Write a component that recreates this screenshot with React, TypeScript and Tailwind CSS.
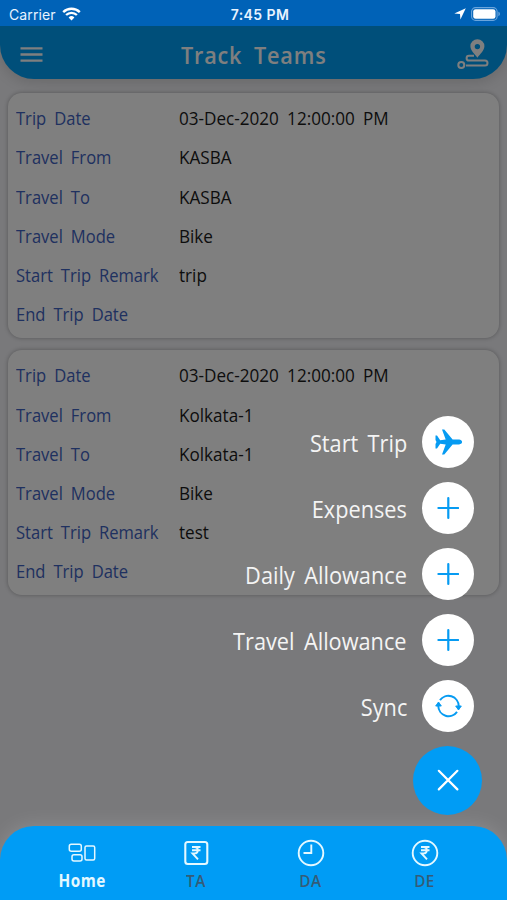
import type { ReactNode } from "react"
import clsx from "clsx"

interface Trip {
  mode: string
  from: string
  to: string
  remark: string
}

const trips: Trip[] = [
  { from: "KASBA", to: "KASBA", mode: "Bike", remark: "trip" },
  { from: "Kolkata-1", to: "Kolkata-1", mode: "Bike", remark: "test" },
]

function StatusBar() {
  return (
    <div className="relative z-20 grid h-[26px] shrink-0 grid-cols-3 items-center bg-[#0062b7] pl-[9px] pr-[6px] pt-[2px] font-['Inter',sans-serif] text-[13px] text-[#e8f3ff]">
      <div className="flex items-center gap-[6px]">
        <span className="text-[14px] tracking-[0.1px]">Carrier</span>
        <svg width="19" height="14" viewBox="0 0 19 14" fill="none" stroke="white" strokeWidth="2.4">
          <path d="M1.2 5.1a12 12 0 0 1 16.6 0M4.1 8a7.8 7.8 0 0 1 10.8 0" />
          <path d="M9.5 13.4 6.6 10.5a4.1 4.1 0 0 1 5.8 0z" fill="white" stroke="none" />
        </svg>
      </div>
      <span className="pl-[10px] text-center text-[14px] font-semibold tracking-[0.4px]">7:45 PM</span>
      <div className="flex items-center justify-end gap-[5px]">
        <svg width="12" height="12" viewBox="0 0 12 12" fill="white">
          <path d="M11.8.2 6.4 11.6 6 6.1.3 5.6z" />
        </svg>
        <svg width="30" height="14" viewBox="0 0 30 14">
          <rect x=".6" y=".6" width="25.5" height="12.8" rx="4" fill="none" stroke="#6aa5dc" strokeWidth="1.1" />
          <rect x="2.2" y="2.2" width="22.3" height="9.6" rx="2.4" fill="white" />
          <path d="M27.4 4.8c2 .6 2 3.8 0 4.4z" fill="#6aa5dc" />
        </svg>
      </div>
    </div>
  )
}

function Header() {
  return (
    <header className="flex h-[53px] shrink-0 items-center justify-between rounded-b-[34px] bg-[#009ff5] pl-[20px] pr-[18px] pt-[4px] text-white shadow-[0_3px_14px_rgba(0,0,0,0.14)]">
      <svg width="23" height="15" viewBox="0 0 23 15" stroke="currentColor" strokeWidth="2.4">
        <path d="M.5 1.4h22M.5 7.5h22M.5 13.6h22" />
      </svg>
      <h1 className="ml-[8px] scale-x-[0.9] text-[24px] font-semibold tracking-[0.9px] [word-spacing:6px]">
        Track Teams
      </h1>
      <svg width="32" height="32" viewBox="0 0 32 32" fill="none" stroke="currentColor" strokeWidth="2">
        <path
          d="M20.4.3a7 7 0 0 0-7 7c0 4.3 4.3 7.6 7 11.5 2.7-3.9 7-7.2 7-11.5a7 7 0 0 0-7-7zm0 4.6a2.7 2.7 0 1 1 0 5.4 2.7 2.7 0 0 1 0-5.4z"
          fill="currentColor"
          stroke="none"
        />
        <circle cx="4.3" cy="26" r="3" />
        <path d="M17 16.8h-5a2.4 2.4 0 0 0 0 4.8h16a2.5 2.5 0 0 1 0 5H9" />
      </svg>
    </header>
  )
}

function Row({ label, value }: { label: string; value?: string }) {
  return (
    <div className="flex h-[39.1px] items-center">
      <dt className="w-[163px] shrink-0 text-[#3f62c0]">
        <span className="inline-block origin-left scale-x-[0.92] whitespace-nowrap">{label}</span>
      </dt>
      <dd className="origin-left scale-x-[0.95] text-[#1a1a1a]">{value}</dd>
    </div>
  )
}

function TripCard({ trip }: { trip: Trip }) {
  return (
    <dl className="rounded-[14px] bg-white px-[8px] pb-[4.1px] pt-[6.3px] text-[18px] shadow-[0_0_4px_rgba(0,0,0,0.3)] [word-spacing:4px]">
      <Row label="Trip Date" value="03-Dec-2020 12:00:00 PM" />
      <Row label="Travel From" value={trip.from} />
      <Row label="Travel To" value={trip.to} />
      <Row label="Travel Mode" value={trip.mode} />
      <Row label="Start Trip Remark" value={trip.remark} />
      <Row label="End Trip Date" />
    </dl>
  )
}

function PlusIcon() {
  return (
    <svg width="22" height="22" viewBox="0 0 22 22" stroke="currentColor" strokeWidth="2.2" strokeLinecap="round">
      <path d="M11.3 1.1v19.8M1.4 11h19.8" />
    </svg>
  )
}

function PlaneIcon() {
  return (
    <svg width="28" height="26" viewBox="0 0 28 26" fill="currentColor">
      <path d="M1.5 6.5H3l3.200 4.700 5.500-.7L8 .6h2.300l8.300 10h6.500c4 .4 4 4.400 0 4.800h-6.500l-8.300 10H8l3.700-9.900-5.500-.7L3 19.500H1.500V15l1-2-1-2z" />
    </svg>
  )
}

function SyncIcon() {
  return (
    <svg width="27" height="24" viewBox="0 0 27 24" fill="none" stroke="currentColor" strokeWidth="2">
      <path d="M5 6.2A10.3 10.3 0 0 1 23.7 12M22 17.8A10.3 10.3 0 0 1 3.3 12" />
      <path d="M20.7 12h5.6l-2.8 4zM.7 12h5.6L3.5 8z" fill="currentColor" strokeWidth="1" strokeLinejoin="round" />
    </svg>
  )
}

function Action({ label, children }: { label: string; children: ReactNode }) {
  return (
    <div className="flex items-center gap-[15px]">
      <span className="origin-right scale-x-[0.925] pt-[4px] text-[23.5px] leading-none text-[#f4f4f4] [word-spacing:4px]">
        {label}
      </span>
      <button className="flex size-[52px] items-center justify-center rounded-full bg-white text-[#069bf2]">
        {children}
      </button>
    </div>
  )
}

function ActionMenu() {
  return (
    <div className="absolute right-[25px] top-[416px] z-20 flex flex-col items-end">
      <div className="flex flex-col items-end gap-[14px] pr-[8px]">
        <Action label="Start Trip">
          <PlaneIcon />
        </Action>
        <Action label="Expenses">
          <PlusIcon />
        </Action>
        <Action label="Daily Allowance">
          <PlusIcon />
        </Action>
        <Action label="Travel Allowance">
          <PlusIcon />
        </Action>
        <Action label="Sync">
          <SyncIcon />
        </Action>
      </div>
      <button className="mt-[13.5px] flex size-[69px] items-center justify-center rounded-full bg-[#009cf5] text-white">
        <svg width="22" height="22" viewBox="0 0 22 22" stroke="currentColor" strokeWidth="2.2" strokeLinecap="round">
          <path d="M1.8 1.8l18.6 18.6M20.4 1.8L1.8 20.4" />
        </svg>
      </button>
    </div>
  )
}

function Tab({ label, active, children }: { label: string; active?: boolean; children: ReactNode }) {
  return (
    <div className="flex flex-col items-center">
      <svg width="28" height="28" viewBox="0 0 28 28" fill="none" stroke="#e4f8ff" strokeWidth="1.9">
        {children}
      </svg>
      <span
        className={clsx(
          "mt-[4px] scale-x-[0.9] text-[17px] leading-[20px] tracking-[0.5px]",
          active ? "font-bold text-[#e4f8ff]" : "font-semibold text-[#345c78]",
        )}
      >
        {label}
      </span>
    </div>
  )
}

const rupee = "M10 8h8.5M10 11.2h8.5M10 8h2.5c4.400 0 4.400 6.400 0 6.400H10.500l5.500 6"

function TabBar() {
  return (
    <nav className="relative z-10 grid h-[74px] shrink-0 grid-cols-4 rounded-t-[34px] bg-[#009cf5] px-[25px] pt-[13px] shadow-[0_-2px_18px_rgba(255,255,255,0.14)]">
      <Tab label="Home" active>
        <rect x="1.3" y="5.2" width="12" height="7" rx="2" strokeWidth="1.5" />
        <rect x="4" y="15.7" width="10" height="6.3" rx="2" strokeWidth="1.5" />
        <rect x="17" y="7" width="9.7" height="14" rx="1.5" strokeWidth="1.5" />
      </Tab>
      <Tab label="TA">
        <rect x="3.3" y="3" width="22" height="22" rx="2.5" strokeWidth="2.1" />
        <path d={rupee} />
      </Tab>
      <Tab label="DA">
        <circle cx="14" cy="14" r="12.3" />
        <path d="M14.3 5.5V14H6.5" />
      </Tab>
      <Tab label="DE">
        <circle cx="14" cy="14" r="12.3" />
        <path d={rupee} />
      </Tab>
    </nav>
  )
}

export default function App() {
  return (
    <div className="relative flex h-[900px] w-[507px] flex-col overflow-hidden bg-[#f2f2f6] font-['Open_Sans','Noto_Sans',sans-serif]">
      <StatusBar />
      <Header />
      <main className="flex flex-1 flex-col gap-[12.2px] px-[8px] pt-[14px]">
        {trips.map((trip) => (
          <TripCard key={trip.remark} trip={trip} />
        ))}
      </main>
      <div className="absolute inset-0 bg-black/50" />
      <ActionMenu />
      <TabBar />
    </div>
  )
}
